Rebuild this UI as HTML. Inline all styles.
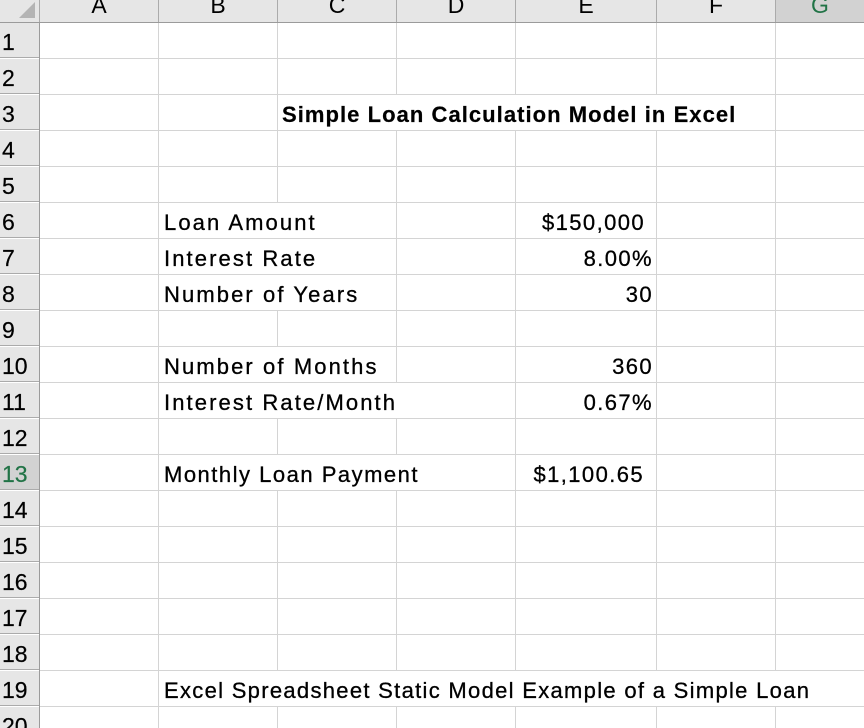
<!DOCTYPE html>
<html style="height:728px;overflow:hidden"><head><style>
body{margin:0;width:864px;height:728px;overflow:hidden;background:#fff;font-family:"Liberation Sans",Arial,sans-serif;position:relative}
.a{position:absolute}
.vl{position:absolute;top:22px;width:1px;height:706px;background:#d4d4d4}
.hl{position:absolute;left:39px;height:1px;width:825px;background:#d4d4d4}
.ch{position:absolute;top:0;height:22px;background:#e6e6e6;border-right:1px solid #ababab;box-sizing:border-box;text-align:center;font-size:23px;line-height:10px;overflow:hidden;color:#000}
.rh{position:absolute;left:0;width:39px;height:35px;background:#e6e6e6;font-size:23px;line-height:38px;padding-left:2px;box-sizing:border-box;color:#000;border-bottom:1px solid #ababab;overflow:hidden;-webkit-text-stroke:0.2px #000}
.t{position:absolute;height:35px;line-height:40px;font-size:22px;background:#fff;white-space:nowrap;letter-spacing:2.1px;color:#000;-webkit-text-stroke:0.3px #000;overflow:hidden}
</style></head><body>
<div class="vl" style="left:158px"></div><div class="vl" style="left:277px"></div><div class="vl" style="left:396px"></div><div class="vl" style="left:515px"></div><div class="vl" style="left:656px"></div><div class="vl" style="left:775px"></div>
<div class="hl" style="top:58px"></div><div class="hl" style="top:94px"></div><div class="hl" style="top:130px"></div><div class="hl" style="top:166px"></div><div class="hl" style="top:202px"></div><div class="hl" style="top:238px"></div><div class="hl" style="top:274px"></div><div class="hl" style="top:310px"></div><div class="hl" style="top:346px"></div><div class="hl" style="top:382px"></div><div class="hl" style="top:418px"></div><div class="hl" style="top:454px"></div><div class="hl" style="top:490px"></div><div class="hl" style="top:526px"></div><div class="hl" style="top:562px"></div><div class="hl" style="top:598px"></div><div class="hl" style="top:634px"></div><div class="hl" style="top:670px"></div><div class="hl" style="top:706px"></div>
<div class="ch" style="left:0;width:40px"><svg width="40" height="22" style="position:absolute;left:0;top:0"><polygon points="35,2 35,18 19,18" fill="#b4b4b4"/></svg></div>
<div class="ch" style="left:40px;width:119px">A</div>
<div class="ch" style="left:159px;width:119px">B</div>
<div class="ch" style="left:278px;width:119px">C</div>
<div class="ch" style="left:397px;width:119px">D</div>
<div class="ch" style="left:516px;width:141px">E</div>
<div class="ch" style="left:657px;width:119px">F</div>
<div class="ch" style="left:776px;width:88px;background:#d2d2d2;color:#217346;border-right:none">G</div>
<div class="a" style="left:0;top:22px;width:864px;height:1px;background:#9b9b9b"></div>
<div class="rh" style="top:23px">1</div><div class="rh" style="top:59px">2</div><div class="rh" style="top:95px">3</div><div class="rh" style="top:131px">4</div><div class="rh" style="top:167px">5</div><div class="rh" style="top:203px">6</div><div class="rh" style="top:239px">7</div><div class="rh" style="top:275px">8</div><div class="rh" style="top:311px">9</div><div class="rh" style="top:347px">10</div><div class="rh" style="top:383px">11</div><div class="rh" style="top:419px">12</div><div class="rh" style="top:455px;background:#d2d2d2;color:#217346;-webkit-text-stroke:0.2px #217346">13</div><div class="rh" style="top:491px">14</div><div class="rh" style="top:527px">15</div><div class="rh" style="top:563px">16</div><div class="rh" style="top:599px">17</div><div class="rh" style="top:635px">18</div><div class="rh" style="top:671px">19</div><div class="rh" style="top:707px;height:21px;border-bottom:none">20</div>
<div class="a" style="left:39px;top:22px;width:1px;height:706px;background:#9b9b9b"></div>
<div class="t" style="left:280px;top:95px;width:495px;font-weight:bold;letter-spacing:1.05px;padding-left:2px;-webkit-text-stroke:0.2px #000;box-sizing:border-box">Simple Loan Calculation Model in Excel</div>
<div class="t" style="left:159px;top:203px;width:237px;padding-left:5px;box-sizing:border-box">Loan Amount</div>
<div class="t" style="left:159px;top:239px;width:237px;padding-left:5px;box-sizing:border-box">Interest Rate</div>
<div class="t" style="left:159px;top:275px;width:237px;padding-left:5px;box-sizing:border-box">Number of Years</div>
<div class="t" style="left:159px;top:347px;width:237px;padding-left:5px;box-sizing:border-box">Number of Months</div>
<div class="t" style="left:159px;top:383px;width:300px;padding-left:5px;box-sizing:border-box">Interest Rate/Month</div>
<div class="t" style="left:159px;top:455px;width:356px;padding-left:5px;box-sizing:border-box;letter-spacing:1.5px">Monthly Loan Payment</div>
<div class="t" style="left:159px;top:671px;width:705px;padding-left:5px;box-sizing:border-box;letter-spacing:1.3px">Excel Spreadsheet Static Model Example of a Simple Loan</div>
<div class="t" style="left:516px;top:203px;width:129px;text-align:right;background:none;letter-spacing:1.4px">$150,000</div>
<div class="t" style="left:516px;top:239px;width:137px;text-align:right;background:none;letter-spacing:1.4px">8.00%</div>
<div class="t" style="left:516px;top:275px;width:137px;text-align:right;background:none;letter-spacing:1.4px">30</div>
<div class="t" style="left:516px;top:347px;width:137px;text-align:right;background:none;letter-spacing:1.4px">360</div>
<div class="t" style="left:516px;top:383px;width:137px;text-align:right;background:none;letter-spacing:1.4px">0.67%</div>
<div class="t" style="left:516px;top:455px;width:128px;text-align:right;background:none;letter-spacing:1.4px">$1,100.65</div>
</body></html>
